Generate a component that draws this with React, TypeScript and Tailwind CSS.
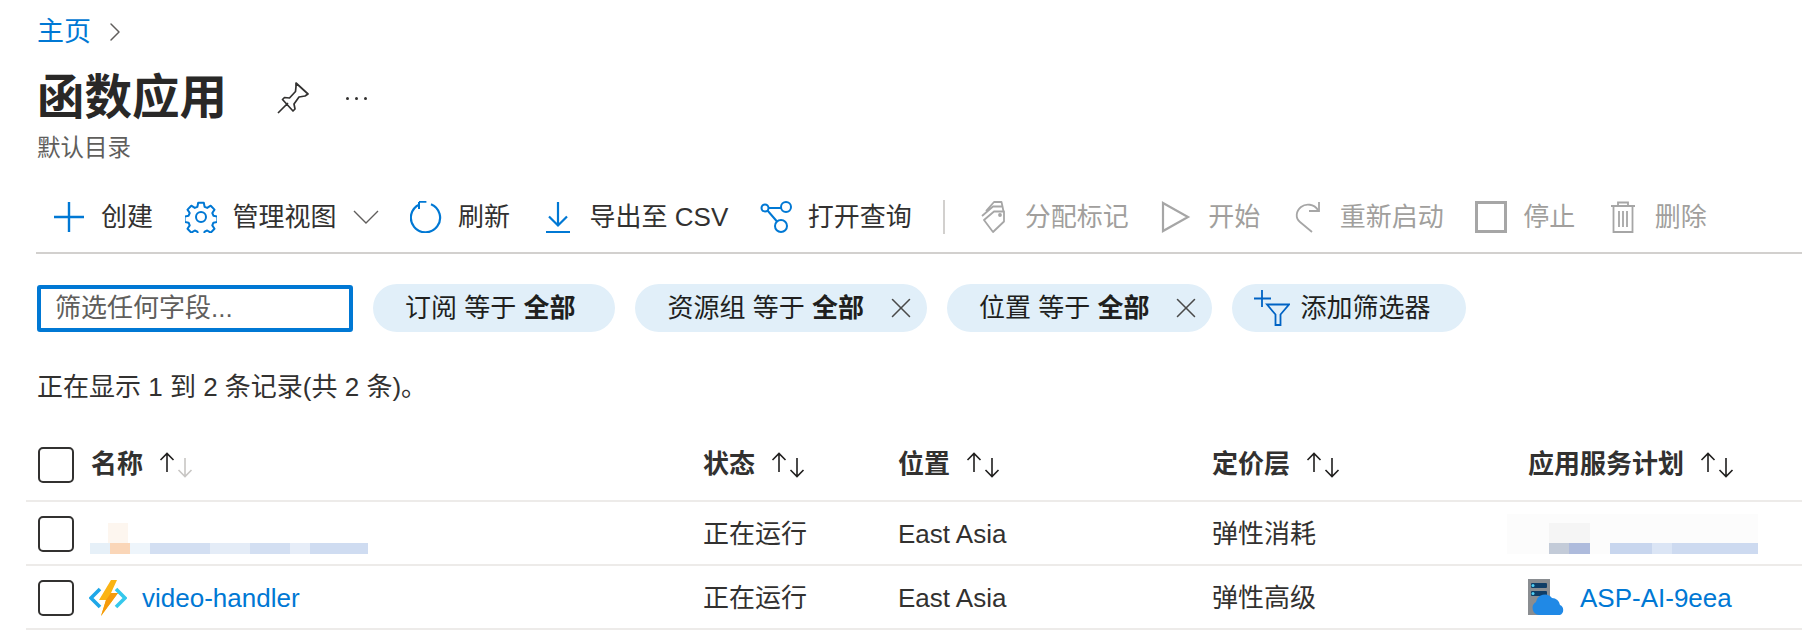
import type { ReactNode } from "react";
import { ChevronRight, X } from "lucide-react";

const rowGrid = "grid grid-cols-[677px_195px_314px_316px_1fr] items-center";

function PlusIcon() {
  return (
    <svg width="32" height="32" viewBox="0 0 32 32" fill="none" stroke="#0078d4" strokeWidth="2.4">
      <path d="M16 1v30M1 16h30" />
    </svg>
  );
}

function GearIcon() {
  return (
    <svg width="32" height="32" viewBox="0 0 32 32" fill="none" stroke="#0078d4" strokeWidth="2" strokeLinejoin="round">
      <path d="M13.2 1.8h5.6l.8 4 2.6 1.1 3.5-2.2 3.8 3.9-2.2 3.4 1.1 2.7 4 .8v5.4l-4 .8-1.1 2.7 2.2 3.4-3.8 3.9-3.5-2.2-2.6 1.1-.8 4h-5.6l-.8-4-2.6-1.1-3.5 2.2-3.8-3.9 2.2-3.4-1.1-2.7-4-.8v-5.400l4-.8 1.1-2.7-2.2-3.4 3.8-3.9 3.5 2.2 2.6-1.1z" />
      <circle cx="16" cy="16" r="5" />
    </svg>
  );
}

function RefreshIcon() {
  return (
    <svg width="32" height="32" viewBox="0 0 32 32" fill="none" stroke="#0078d4" strokeWidth="2.2">
      <path d="M21 3.2A14.6 14.6 0 1 1 9.5 3.4" />
      <path d="M9 .8h7.4M9 1v7" strokeWidth="2" />
    </svg>
  );
}

function DownloadIcon() {
  return (
    <svg width="32" height="32" viewBox="0 0 32 32" fill="none" stroke="#0078d4" strokeWidth="2.2">
      <path d="M16 1v23M7 15.5l9 9 9-9M4 31h24" />
    </svg>
  );
}

function QueryIcon() {
  return (
    <svg width="32" height="32" viewBox="0 0 32 32" fill="none" stroke="#0078d4" strokeWidth="2">
      <circle cx="5" cy="7" r="3.500" />
      <circle cx="26" cy="6" r="5" />
      <circle cx="21" cy="25" r="6" />
      <path d="M8.500 7H21M7.500 9.500l9.500 11" />
    </svg>
  );
}

function TagIcon() {
  return (
    <svg width="32" height="32" viewBox="0 0 32 32" fill="none" stroke="#a6a6a6" strokeWidth="1.8" strokeLinejoin="round">
      <path d="M7 19l10-8.500h10v10L16 31z" />
      <path d="M5 15L16 5.500h9.500l1 5M9 10l8-9h7.500l1 4.500" />
      <circle cx="23" cy="14" r="1" />
    </svg>
  );
}

function PlayIcon() {
  return (
    <svg width="32" height="32" viewBox="0 0 32 32" fill="none" stroke="#a6a6a6" strokeWidth="2.2">
      <path d="M3 2l25 14-25 14z" />
    </svg>
  );
}

function RestartIcon() {
  return (
    <svg width="32" height="32" viewBox="0 0 32 32" fill="none" stroke="#a6a6a6" strokeWidth="1.8">
      <path d="M26 9C22 3 14 2 9 6 4 10 3 17 8 21l12 10" />
      <path d="M27 1v9H17" />
    </svg>
  );
}

function StopIcon() {
  return (
    <svg width="32" height="32" viewBox="0 0 32 32" fill="none" stroke="#a6a6a6" strokeWidth="3">
      <rect x="1.500" y="1.500" width="29" height="29" />
    </svg>
  );
}

function TrashIcon() {
  return (
    <svg width="32" height="32" viewBox="0 0 32 32" fill="none" stroke="#a6a6a6" strokeWidth="1.8">
      <path d="M4 5h24M11 5V1.500h10V5M6.500 5v26h19V5M12 10v16M16 10v16M20 10v16" />
    </svg>
  );
}

function ToolItem({ icon, label, disabled }: { icon: ReactNode; label: string; disabled?: boolean }) {
  return (
    <div className={`flex items-center gap-4 ${disabled ? "text-[#a19f9d]" : "text-[#323130]"}`}>
      {icon}
      <span>{label}</span>
    </div>
  );
}

function Pill({ field, closable }: { field: string; closable?: boolean }) {
  return (
    <div className={`flex h-12 items-center gap-5 rounded-full bg-[#e1eff9] pl-8 text-[#201f1e] ${closable ? "pr-[9px]" : "pr-10"}`}>
      <span>
        {field} 等于 <b>全部</b>
      </span>
      {closable && <X size={34} strokeWidth={1.1} className="text-[#4a4a4a]" />}
    </div>
  );
}

function SortArrows({ active }: { active?: boolean }) {
  return (
    <svg width="34" height="26" viewBox="0 0 34 26" fill="none" strokeWidth="1.600">
      <path d="M8 20V2M1.500 8l6.500-6.500L14.500 8" stroke="#201f1e" />
      <path d="M26 6v18M19.500 18l6.500 6.500 6.500-6.500" stroke={active ? "#c8c6c4" : "#201f1e"} />
    </svg>
  );
}

function HeaderCell({ label }: { label: string }) {
  return (
    <div className="flex items-center gap-4 font-bold text-[#323130]">
      {label}
      <SortArrows />
    </div>
  );
}

function Checkbox() {
  return <div className="size-9 shrink-0 rounded-[5px] border-[2.5px] border-[#323130]" />;
}

function FunctionIcon() {
  return (
    <svg width="38" height="38" viewBox="0 0 38 38" className="shrink-0">
      <path d="M11 10L2 19l9 9" fill="none" stroke="#1ea7e8" strokeWidth="3.600" />
      <path d="M27 10l9 9-9 9" fill="none" stroke="#35c8ec" strokeWidth="3.600" />
      <path d="M22 1h6l-6 13h7L12 37l5-16h-7z" fill="#fbb414" />
      <path d="M22 14h7L12 37l5-16z" fill="#f59a0c" />
    </svg>
  );
}

function PlanIcon() {
  return (
    <svg width="38" height="38" viewBox="0 0 38 38" className="shrink-0">
      <rect x="0" y="0" width="22" height="36" fill="#8a8d91" />
      <rect x="3" y="4" width="16" height="5" rx="1" fill="#0f3d66" />
      <rect x="3" y="12" width="16" height="5" rx="1" fill="#0f3d66" />
      <circle cx="5" cy="6.500" r="1.500" fill="#4fd1f5" />
      <circle cx="5" cy="14.500" r="1.500" fill="#4fd1f5" />
      <path d="M11 36a7 7 0 0 1-3-13 9 9 0 0 1 16-4 8 8 0 0 1 8 7 5.500 5.500 0 0 1 0 10z" fill="#2089e6" />
    </svg>
  );
}

// 被打码的行：几段模糊色块
function BlurredName() {
  return (
    <div className="ml-[16px] flex h-10 w-[278px] flex-col justify-end">
      <div className="ml-[18px] h-5 w-[20px] bg-[#fdf6ef]" />
      <div className="flex h-[11px]">
        <div className="w-[20px] bg-[#e6f0f8]" />
        <div className="w-[20px] bg-[#fad6b8]" />
        <div className="w-[20px] bg-[#eef5fb]" />
        <div className="w-[60px] bg-[#d3dff2]" />
        <div className="w-[40px] bg-[#e4ecf7]" />
        <div className="w-[40px] bg-[#d3dff2]" />
        <div className="w-[20px] bg-[#e6edf8]" />
        <div className="w-[58px] bg-[#cfdcf1]" />
      </div>
    </div>
  );
}

function BlurredPlan() {
  return (
    <div className="-ml-[21px] flex h-10 w-[251px] flex-col justify-end bg-[#fcfcfc]">
      <div className="ml-[42px] h-5 w-[41px] bg-[#f5f5f5]" />
      <div className="flex h-[11px]">
        <div className="w-[42px] bg-[#fcfcfc]" />
        <div className="w-[20px] bg-[#c3cbd8]" />
        <div className="w-[21px] bg-[#aebbdc]" />
        <div className="w-[20px] bg-[#fcfcfc]" />
        <div className="w-[42px] bg-[#c8d6ee]" />
        <div className="w-[20px] bg-[#dbe5f5]" />
        <div className="w-[86px] bg-[#cddaf0]" />
      </div>
    </div>
  );
}

export default function App() {
  return (
    <main
      className="h-[632px] overflow-hidden bg-white text-[26px] text-[#323130]"
      style={{ fontFamily: '"Liberation Sans", "Noto Sans CJK SC", sans-serif' }}
    >
      <nav className="flex h-16 items-center pl-[37px]">
        <span className="text-[27px] text-[#0078d4]">主页</span>
        <ChevronRight size={32} strokeWidth={1.1} className="ml-[8px] text-[#605e5c]" />
      </nav>

      <div className="flex h-[68px] items-center pl-[37px]">
        <h1 className="text-[47.500px] font-bold text-[#292827]">函数应用</h1>
        <svg width="32" height="32" viewBox="0 0 32 32" fill="none" stroke="#323130" strokeWidth="1.7" strokeLinejoin="round" className="ml-[50px]">
          <path d="M1 31l10-10M19 1l12 11-3 2-6 1-5 7 1 5-2 2L5.500 17.500l2-2 5 .5 6-6.500.5-5z" />
        </svg>
        <div className="ml-[37px] flex gap-[6px]">
          <span className="size-[3px] rounded-full bg-[#323130]" />
          <span className="size-[3px] rounded-full bg-[#323130]" />
          <span className="size-[3px] rounded-full bg-[#323130]" />
        </div>
      </div>

      <p className="flex h-[30px] items-center pt-1 pl-[37px] text-[23.500px] text-[#605e5c]">默认目录</p>

      <div className="ml-[36px] flex h-[92px] items-center gap-[31.500px] border-b-2 border-[#d2d0ce] pt-5 pl-[17px]">
        <ToolItem icon={<PlusIcon />} label="创建" />
        <div className="flex items-center">
          <ToolItem icon={<GearIcon />} label="管理视图" />
          <svg width="26" height="14" viewBox="0 0 26 14" fill="none" stroke="#605e5c" strokeWidth="1.4" className="ml-[16px]">
            <path d="M1 1l12 12L25 1" />
          </svg>
        </div>
        <ToolItem icon={<RefreshIcon />} label="刷新" />
        <ToolItem icon={<DownloadIcon />} label="导出至 CSV" />
        <ToolItem icon={<QueryIcon />} label="打开查询" />
        <div className="h-[34px] w-0.5 bg-[#d2d0ce]" />
        <ToolItem icon={<TagIcon />} label="分配标记" disabled />
        <ToolItem icon={<PlayIcon />} label="开始" disabled />
        <ToolItem icon={<RestartIcon />} label="重新启动" disabled />
        <ToolItem icon={<StopIcon />} label="停止" disabled />
        <ToolItem icon={<TrashIcon />} label="删除" disabled />
      </div>

      <div className="mt-[30px] flex items-center gap-5 pl-[37px]">
        <div className="flex h-[47px] w-[316px] items-center rounded-[3px] border-4 border-[#0078d4] pl-[14px] text-[#605e5c]">
          筛选任何字段...
        </div>
        <Pill field="订阅" />
        <Pill field="资源组" closable />
        <Pill field="位置" closable />
        <div className="flex h-12 items-center gap-[10px] rounded-full bg-[#e1eff9] pr-9 pl-[22px] text-[#201f1e]">
          <svg width="36" height="36" viewBox="0 0 36 36" fill="none" stroke="#0063c4" strokeWidth="1.800">
            <path d="M8 0v17M0 8.500h17" />
            <path d="M13 14.500h22l-8.500 10V35h-5V24.500z" />
          </svg>
          <span>添加筛选器</span>
        </div>
      </div>

      <p className="mt-[39px] flex h-8 items-center pl-[37px] text-[#323130]">正在显示 1 到 2 条记录(共 2 条)。</p>

      <div className="ml-[26px]">
        <div className={`${rowGrid} h-[99px] border-b-2 border-[#edebe9] pt-[26px]`}>
          <div className="flex items-center pl-3 font-bold">
            <Checkbox />
            <span className="mr-4 ml-[17px]">名称</span>
            <SortArrows active />
          </div>
          <HeaderCell label="状态" />
          <HeaderCell label="位置" />
          <HeaderCell label="定价层" />
          <HeaderCell label="应用服务计划" />
        </div>

        <div className={`${rowGrid} h-16 border-b-2 border-[#edebe9] pt-0.5`}>
          <div className="flex items-center pl-3">
            <Checkbox />
            <BlurredName />
          </div>
          <div>正在运行</div>
          <div>East Asia</div>
          <div>弹性消耗</div>
          <BlurredPlan />
        </div>

        <div className={`${rowGrid} h-16 border-b-2 border-[#edebe9] pt-0.5`}>
          <div className="flex items-center gap-[15px] pl-3">
            <Checkbox />
            <FunctionIcon />
            <span className="text-[#0078d4]">video-handler</span>
          </div>
          <div>正在运行</div>
          <div>East Asia</div>
          <div>弹性高级</div>
          <div className="flex items-center gap-[14px] text-[#0078d4]">
            <PlanIcon />
            ASP-AI-9eea
          </div>
        </div>
      </div>
    </main>
  );
}
